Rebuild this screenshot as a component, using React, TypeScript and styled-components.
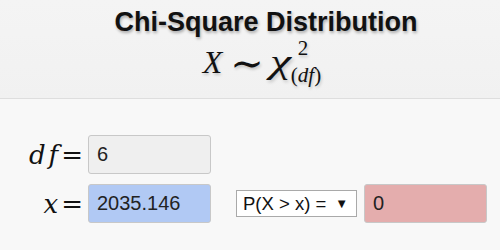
import React from "react";
import { styled, createGlobalStyle } from "styled-components";

const GlobalStyle = createGlobalStyle`
  html, body {
    margin: 0;
    padding: 0;
    background: #f8f8f8;
  }
`;

const Page = styled.div`
  width: 500px;
  height: 250px;
  overflow: hidden;
  background: #f8f8f8;
`;

const Header = styled.div`
  height: 99px;
  box-sizing: border-box;
  border-bottom: 1px solid #dedede;
  background: linear-gradient(#f4f4f4, #f1f1f1);
  display: flex;
  flex-direction: column;
  align-items: center;
  padding-top: 7px;
  padding-left: 32px;
`;

const Title = styled.h1`
  margin: 0;
  font-family: "Liberation Sans", Arial, sans-serif;
  font-weight: bold;
  font-size: 27px;
  line-height: 30px;
  color: #111;
  text-shadow: 1px 2px 3px rgba(0, 0, 0, 0.3);
`;

const Formula = styled.div`
  display: flex;
  align-items: flex-start;
  font-family: "Liberation Serif", "Times New Roman", serif;
  font-size: 32px;
  line-height: 34px;
  color: #111;
  margin-top: 8px;
  margin-right: 8px;
  text-shadow: 1px 2px 3px rgba(0, 0, 0, 0.2);
`;

const Var = styled.span`
  font-style: italic;
`;

const Chi = styled.span`
  display: inline-block;
  width: 28px;
  font-style: italic;
  font-size: 33px;
  line-height: 34px;
  transform: scaleX(1.45);
  transform-origin: left center;
`;

const Op = styled.span`
  font-family: "DejaVu Serif", serif;
  font-size: 40px;
  line-height: 36px;
  margin: 0 6px 0 8px;
`;

const Scripts = styled.span`
  display: inline-flex;
  flex-direction: column;
  font-size: 21px;
  line-height: 18px;
  margin-top: -6px;
  margin-left: 0;
`;

const Sup = styled.span``;

const Sub = styled.span`
  margin-left: -7px;
  margin-top: 9px;
  white-space: nowrap;
`;

const Form = styled.div`
  display: flex;
  flex-direction: column;
  gap: 10px;
  padding-top: 36px;
`;

const Row = styled.div`
  display: flex;
  align-items: center;
`;

const Label = styled.div`
  width: 83px;
  text-align: right;
  font-family: "DejaVu Serif", serif;
  font-size: 26px;
  line-height: 34px;
  color: #111;
  margin-right: 5px;
`;

const LabelVar = styled.span`
  font-style: italic;
  letter-spacing: 3px;
`;

const Eq = styled.span`
  font-style: normal;
  margin-left: 0;
`;

const Field = styled.div<{ $bg: string }>`
  width: 123px;
  height: 39px;
  box-sizing: border-box;
  border: 1px solid #c8c8c8;
  border-radius: 3px;
  background: ${(p) => p.$bg};
  font-family: "Liberation Sans", Arial, sans-serif;
  font-size: 20px;
  color: #222;
  display: flex;
  align-items: center;
  padding-left: 8px;
`;

const Select = styled.div`
  margin-left: 25px;
  margin-right: 7px;
  width: 121px;
  height: 27px;
  box-sizing: border-box;
  border: 1px solid #a9a9a9;
  background: #fff;
  font-family: "Liberation Sans", Arial, sans-serif;
  font-size: 18.5px;
  color: #111;
  display: flex;
  align-items: center;
  justify-content: space-between;
  padding: 0 8px 0 6px;
`;

const Arrow = styled.span`
  font-size: 13px;
`;

export default function App() {
  return (
    <Page>
      <GlobalStyle />
      <Header>
        <Title>Chi-Square Distribution</Title>
        <Formula>
          <Var>X</Var>
          <Op>∼</Op>
          <Chi>χ</Chi>
          <Scripts>
            <Sup>2</Sup>
            <Sub>
              (<Var>df</Var>)
            </Sub>
          </Scripts>
        </Formula>
      </Header>
      <Form>
        <Row>
          <Label>
            <LabelVar>df</LabelVar>
            <Eq>=</Eq>
          </Label>
          <Field $bg="#efefef">6</Field>
        </Row>
        <Row>
          <Label>
            <LabelVar>x</LabelVar>
            <Eq>=</Eq>
          </Label>
          <Field $bg="#b1c9f4">2035.146</Field>
          <Select>
            <span>P(X &gt; x) =</span>
            <Arrow>▼</Arrow>
          </Select>
          <Field $bg="#e4adad">0</Field>
        </Row>
      </Form>
    </Page>
  );
}
